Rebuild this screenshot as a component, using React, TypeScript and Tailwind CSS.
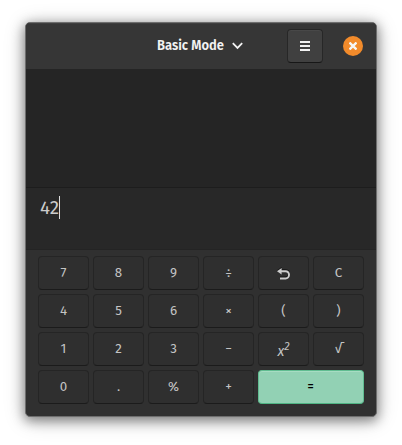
import type { ReactNode } from "react";

const glyph = "font-['Fira_Sans','Noto_Sans',sans-serif]";

function UndoIcon() {
  return (
    <svg width="13" height="12" viewBox="0 0 13 12" className="overflow-visible">
      <g transform="translate(0 -1)">
        <path d="M4 3.2H8.6a3.4 3.6 0 0 1 0 7.3H3" fill="none" stroke="#151515" strokeWidth="2" />
        <path d="M0 3.2 4.6 0v6.4Z" fill="#151515" />
      </g>
      <path d="M4 3.2H8.6a3.4 3.6 0 0 1 0 7.3H3" fill="none" stroke="#cccccc" strokeWidth="1.9" />
      <path d="M0 3.2 4.6 0v6.4Z" fill="#cccccc" />
    </svg>
  );
}

type Key = { id: string; label: ReactNode };

const keys: Key[] = [
  { id: "7", label: "7" },
  { id: "8", label: "8" },
  { id: "9", label: "9" },
  { id: "divide", label: "÷" },
  { id: "undo", label: <UndoIcon /> },
  { id: "clear", label: "C" },
  { id: "4", label: "4" },
  { id: "5", label: "5" },
  { id: "6", label: "6" },
  { id: "times", label: "×" },
  { id: "open", label: "(" },
  { id: "close", label: ")" },
  { id: "1", label: "1" },
  { id: "2", label: "2" },
  { id: "3", label: "3" },
  { id: "minus", label: "−" },
  {
    id: "square",
    label: (
      <span className="flex items-start italic leading-none">
        <span className="pt-[4px] text-[14px]">x</span>
        <span className="text-[11px]">2</span>
      </span>
    ),
  },
  { id: "root", label: "√" },
  { id: "0", label: "0" },
  { id: "dot", label: "." },
  { id: "percent", label: "%" },
  { id: "plus", label: "+" },
];

export default function App() {
  return (
    <div className={`h-[445px] w-[402px] overflow-hidden bg-white pl-[25px] pt-[22px] ${glyph}`}>
      <div className="flex h-[395px] w-[352px] flex-col overflow-hidden rounded-[5px] border border-[#6e6e6e] bg-[#303030] shadow-[0_3px_12px_1px_rgba(0,0,0,0.42),0_3px_22px_rgba(0,0,0,0.2)]">
        <header className="flex h-[46px] shrink-0 items-center bg-[#363636] pl-[131px] shadow-[inset_0_1px_0_#3f3f3f]">
          <button className="flex w-[86px] items-center justify-between text-[#f2f2f2]">
            <svg width="68" height="18" className="overflow-visible">
              <text x="0" y="13" textLength="67" lengthAdjust="spacingAndGlyphs" className="fill-[#f2f2f2] text-[14px] font-semibold">
                Basic Mode
              </text>
            </svg>
            <svg width="11" height="8" viewBox="0 0 11 8" fill="none" stroke="#f2f2f2" strokeWidth="1.8">
              <path d="m0.8 1.2 4.7 4.7 4.7-4.7" />
            </svg>
          </button>
          <button className="ml-[44px] flex h-[34px] w-[36px] items-center justify-center rounded-[4px] border border-[#272727] border-b-[#171717] bg-[#404040] shadow-[inset_0_1px_0_#484848]">
            <span className="flex w-[10px] flex-col gap-[2px]">
              <span className="h-[2px] bg-[#f2f2f2]" />
              <span className="h-[2px] bg-[#f2f2f2]" />
              <span className="h-[2px] bg-[#f2f2f2]" />
            </span>
          </button>
          <button className="ml-[20px] flex size-[20px] items-center justify-center rounded-full bg-[#f28b2b]">
            <svg width="8" height="8" viewBox="0 0 8 8" stroke="#f6f6f6" strokeWidth="2.3">
              <path d="m0.5 0.5 7 7m0-7-7 7" />
            </svg>
          </button>
        </header>
        <div className="h-[118px] shrink-0 bg-[#252525]" />
        <div className="flex h-[62px] shrink-0 items-start border-t border-[#1d1d1d] bg-[#282828] pl-[14px] pt-[8px]">
          <svg width="19" height="23" className="overflow-visible">
            <text x="0" y="18" textLength="19" lengthAdjust="spacingAndGlyphs" className="fill-[#cccccc] text-[18px]">
              42
            </text>
          </svg>
          <span className="h-[23px] w-px bg-[#dddddd]" />
        </div>
        <main className="grid grow auto-rows-[34px] grid-cols-[repeat(6,51px)] content-start gap-1 border-t border-[#242424] px-[12px] pt-[6px]">
          {keys.map((key) => (
            <button
              key={key.id}
              className="flex items-center justify-center rounded-[4px] border border-[#252525] border-b-[#1b1b1b] bg-[#2f2f2f] pt-px text-[13.33px] leading-none text-[#c4c4c4]"
            >
              {key.label}
            </button>
          ))}
          <button className="col-span-2 flex items-center justify-center rounded-[4px] border border-[#60bd91] border-b-[#4fb584] bg-[#92d1b4] pr-px text-[12px] font-semibold leading-none text-black shadow-[inset_0_1px_0_#a6dcc2]">
            =
          </button>
        </main>
      </div>
    </div>
  );
}
